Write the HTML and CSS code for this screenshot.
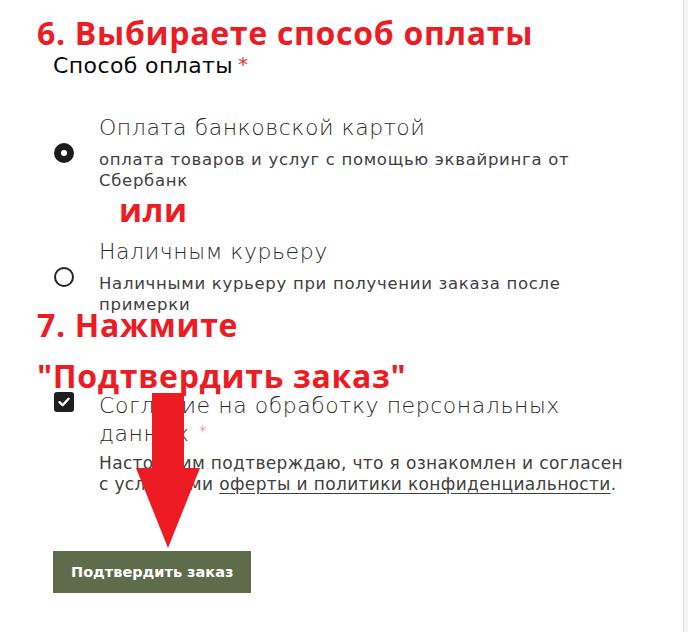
FILE: index.html
```html
<!DOCTYPE html>
<html lang="ru">
<head>
<meta charset="utf-8">
<title>Способ оплаты</title>
<link rel="stylesheet" href="styles.css">
</head>
<body>
<div class="page">
  <main class="main">
    <div class="note note-step6">6. Выбираете способ оплаты</div>

    <section class="form">
      <div class="field-label">Способ оплаты<span class="req">*</span></div>

      <div class="option option-first">
        <span class="radio radio-on"></span>
        <div class="option-body">
          <div class="option-title">Оплата банковской картой</div>
          <div class="option-desc">оплата товаров и услуг с помощью эквайринга от<br>Сбербанк</div>
        </div>
      </div>

      <div class="note note-or">или</div>

      <div class="option option-second">
        <span class="radio"></span>
        <div class="option-body">
          <div class="option-title">Наличным курьеру</div>
          <div class="option-desc">Наличными курьеру при получении заказа после<br>примерки</div>
        </div>
      </div>
    </section>

    <div class="note note-step7">
      <span class="note-line">7. Нажмите</span>
      <span class="note-line">"Подтвердить заказ"</span>
    </div>

    <section class="form">
      <div class="agree">
        <span class="checkbox">
          <svg viewBox="0 0 20 20" width="20" height="20"><path d="M5.5 10.2 L8.6 13.2 L14.6 6.8" fill="none" stroke="#fff" stroke-width="2.4" stroke-linecap="round" stroke-linejoin="round"/></svg>
        </span>
        <div class="option-body">
          <div class="option-title">Согласие на обработку персональных<br>данных <span class="req req-small">*</span></div>
          <div class="option-desc agree-desc">Настоящим подтверждаю, что я ознакомлен и согласен<br>с условиями <a class="link" href="#">оферты и политики конфиденциальности</a>.</div>
        </div>
      </div>

      <button class="submit" type="button">Подтвердить заказ</button>
    </section>

    <svg class="arrow" viewBox="0 0 64 155" width="64" height="155">
      <polygon points="16,0 48,0 48,75 64,75 32,155 0,75 16,75" fill="#ed1c24"/>
    </svg>
  </main>
  <div class="side"></div>
</div>
</body>
</html>
```

FILE: styles.css
```css
html, body {
  margin: 0;
  padding: 0;
  background: #ffffff;
}

.page {
  display: flex;
  min-height: 632px;
}

.main {
  position: relative;
  width: 684px;
  box-sizing: border-box;
  border-right: 1px solid #dcdcdc;
  padding: 15px 0 0 37px;
  font-family: "DejaVu Sans", "Noto Sans", sans-serif;
  color: #333333;
}

.side {
  flex: 1;
  background: #f4f4f4;
}

.note {
  font-family: "Open Sans", "Noto Sans", sans-serif;
  font-weight: 700;
  font-size: 32px;
  line-height: 36px;
  letter-spacing: 0.7px;
  color: #ed1c24;
}

.form {
  padding-left: 16px;
}

.field-label {
  margin-top: 1px;
  font-size: 22px;
  line-height: 28px;
  font-weight: 400;
  letter-spacing: 0.4px;
  color: #0a0a0a;
}

.req {
  display: inline-block;
  color: #e8313a;
  font-size: 20px;
  line-height: 20px;
  vertical-align: top;
  margin-left: 5px;
  margin-top: 2px;
}

.req-small {
  font-size: 16px;
  margin-left: 2px;
}

.option {
  display: flex;
  align-items: center;
}

.option-first {
  margin-top: 34px;
}

.option-second {
  margin-top: 10px;
}

.option-body {
  margin-left: 25px;
}

.option-title {
  font-size: 22px;
  line-height: 28px;
  font-weight: 300;
  letter-spacing: 0.55px;
  color: #2b2b2b;
}

.option-desc {
  margin-top: 7px;
  font-size: 16.5px;
  line-height: 21px;
  font-weight: 400;
  letter-spacing: 0.7px;
  color: #404040;
}

.radio {
  flex: none;
  box-sizing: border-box;
  width: 20px;
  height: 20px;
  margin-left: 1px;
  border-radius: 50%;
  border: 2px solid #222222;
  background: #ffffff;
}

.radio-on {
  border: 7.5px solid #1c1c1c;
}

.note-or {
  margin-top: 1px;
  margin-left: 66px;
}

.note-step7 {
  display: flex;
  flex-direction: column;
  gap: 31px;
  margin-top: 0;
}

.note-line {
  display: block;
  line-height: 20px;
}

.agree {
  display: flex;
  align-items: flex-start;
  margin-top: 6px;
}

.checkbox {
  flex: none;
  display: flex;
  width: 20px;
  height: 20px;
  margin-left: 1px;
  border-radius: 3px;
  background: #1e1e1e;
}

.agree-desc {
  margin-top: 5px;
  font-size: 17px;
  letter-spacing: 0.35px;
}

.link {
  color: inherit;
  text-decoration: underline;
  text-underline-offset: 3px;
}

.submit {
  display: block;
  margin-top: 56px;
  height: 42px;
  padding: 0 18px;
  border: none;
  border-radius: 0;
  background: #5f6c4c;
  color: #ffffff;
  font-family: "DejaVu Sans", sans-serif;
  font-weight: 700;
  font-size: 14.5px;
}

.arrow {
  position: absolute;
  left: 136px;
  top: 393px;
}
```
